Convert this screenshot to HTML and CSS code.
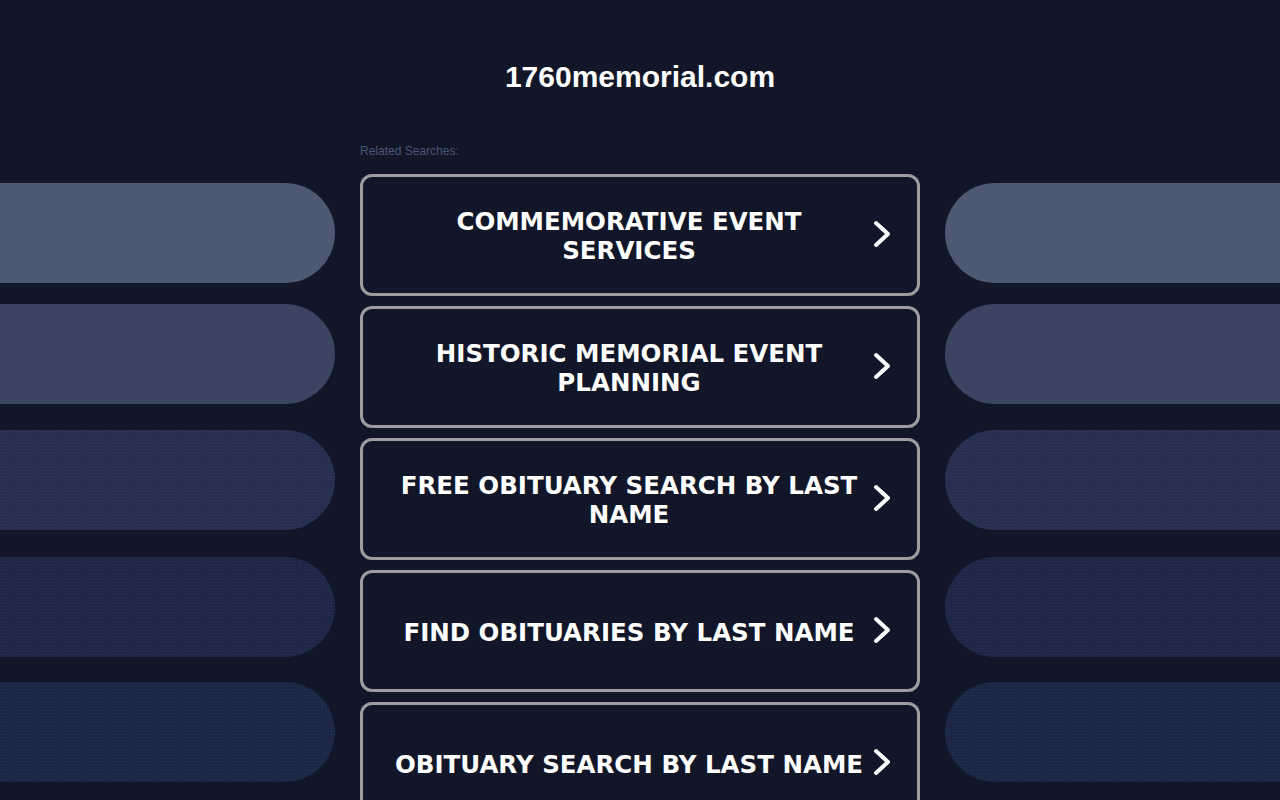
FILE: index.html
```html
<!DOCTYPE html>
<html lang="en">
<head>
    <meta charset="UTF-8">
    <title>1760memorial.com</title>
    <link rel="stylesheet" href="styles.css">
</head>
<body>
    <header class="top">
        <h1 class="domain">1760memorial.com</h1>
    </header>
    <div class="page">
        <div class="side side-left">
            <div class="pill pill-1"></div>
            <div class="pill pill-2"></div>
            <div class="pill pill-3"></div>
            <div class="pill pill-4"></div>
            <div class="pill pill-5"></div>
        </div>
        <div class="links">
            <p class="label">Related Searches:</p>
            <a class="link" href="#"><span class="link-text">COMMEMORATIVE EVENT SERVICES</span><svg class="chevron" viewBox="0 0 24 32"><polyline points="6,4 18,15 6,26"/></svg></a>
            <a class="link" href="#"><span class="link-text">HISTORIC MEMORIAL EVENT PLANNING</span><svg class="chevron" viewBox="0 0 24 32"><polyline points="6,4 18,15 6,26"/></svg></a>
            <a class="link" href="#"><span class="link-text">FREE OBITUARY SEARCH BY LAST NAME</span><svg class="chevron" viewBox="0 0 24 32"><polyline points="6,4 18,15 6,26"/></svg></a>
            <a class="link" href="#"><span class="link-text">FIND OBITUARIES BY LAST NAME</span><svg class="chevron" viewBox="0 0 24 32"><polyline points="6,4 18,15 6,26"/></svg></a>
            <a class="link" href="#"><span class="link-text">OBITUARY SEARCH BY LAST NAME</span><svg class="chevron" viewBox="0 0 24 32"><polyline points="6,4 18,15 6,26"/></svg></a>
        </div>
        <div class="side side-right">
            <div class="pill pill-1"></div>
            <div class="pill pill-2"></div>
            <div class="pill pill-3"></div>
            <div class="pill pill-4"></div>
            <div class="pill pill-5"></div>
        </div>
    </div>
</body>
</html>
```
FILE: styles.css
```css
html, body {
    margin: 0;
    padding: 0;
    background: #111729;
    overflow: hidden;
}

body {
    font-family: "Liberation Sans", Arial, sans-serif;
    color: #ffffff;
}

.top {
    padding-top: 60px;
    text-align: center;
}

.domain {
    margin: 0;
    font-size: 30px;
    line-height: 34px;
    font-weight: bold;
}

.page {
    display: grid;
    grid-template-columns: 335px 560px 1fr;
    column-gap: 25px;
    margin-top: 46px;
}

.side {
    display: flex;
    flex-direction: column;
    padding-top: 43px;
}

.pill {
    height: 100px;
}

.side-left .pill {
    border-radius: 0 50px 50px 0;
}

.side-right .pill {
    border-radius: 50px 0 0 50px;
}

.pill-1 { background: #4d5873; }
.pill-2 { background: #3b4562; margin-top: 21px; }
.pill-3 { background: #272f4e; margin-top: 26px; }
.pill-4 { background: #1e2745; margin-top: 27px; }
.pill-5 { background: #1c2746; margin-top: 25px; }

.pill-3, .pill-4, .pill-5 {
    background-image: radial-gradient(rgba(80, 100, 150, 0.2) 0.6px, transparent 0.9px);
    background-size: 3px 3px;
}

.links {
    display: flex;
    flex-direction: column;
    gap: 10px;
}

.label {
    margin: 4px 0 6px;
    font-size: 12px;
    line-height: 14px;
    color: #4a5475;
}

.link {
    display: flex;
    align-items: center;
    box-sizing: border-box;
    height: 122px;
    padding: 0 23px 0 25px;
    border: 3px solid #9d9d9f;
    border-radius: 12px;
    color: #ffffff;
    text-decoration: none;
}

.link-text {
    flex: 1;
    text-align: center;
    font-family: "DejaVu Sans", Verdana, sans-serif;
    font-weight: bold;
    font-size: 24.5px;
    line-height: 29px;
    padding-top: 2px;
}

.chevron {
    width: 24px;
    height: 32px;
    fill: none;
    stroke: #ffffff;
    stroke-width: 4;
    stroke-linecap: round;
    stroke-linejoin: round;
}
```
